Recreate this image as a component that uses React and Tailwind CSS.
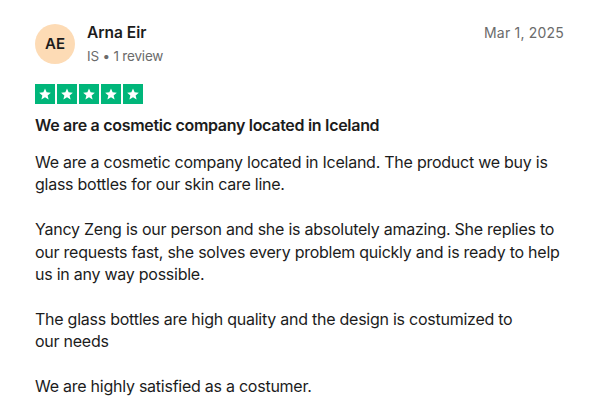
import React from "react";

const paragraphs = [
  "We are a cosmetic company located in Iceland. The product we buy is glass bottles for our skin care line.",
  "Yancy Zeng is our person and she is absolutely amazing. She replies to our requests fast, she solves every problem quickly and is ready to help us in any way possible.",
  "The glass bottles are high quality and the design is costumized to\nour needs",
  "We are highly satisfied as a costumer.",
];

function Star() {
  return (
    <div className="w-5 h-5 bg-[#00b67a] flex items-center justify-center">
      <svg viewBox="0 0 24 24" className="w-[14px] h-[14px]" fill="white">
        <path d="M12 2.5l2.8 6.6 7.2.6-5.5 4.7 1.7 7-6.2-3.8-6.2 3.8 1.7-7L2 9.7l7.2-.6z" />
      </svg>
    </div>
  );
}

export default function App() {
  return (
    <div
      className="w-[595px] h-[406px] bg-white pl-[35px] pr-[31px] pt-6 text-[#1c1c1c] overflow-hidden"
      style={{ fontFamily: "Inter, 'Liberation Sans', sans-serif" }}
    >
      <div className="flex items-start justify-between h-10">
        <div className="flex items-start gap-3">
          <div className="w-10 h-10 shrink-0 rounded-full bg-[#fddbb5] flex items-center justify-center text-[15px] font-semibold">
            AE
          </div>
          <div className="flex flex-col -mt-[1px]">
            <span className="text-[15.5px] font-semibold leading-5">Arna Eir</span>
            <span className="text-[13.5px] tracking-[-0.2px] text-[#6b6b6b] leading-5 mt-[3px]">IS • 1 review</span>
          </div>
        </div>
        <span className="text-[14px] tracking-[0.2px] text-[#6b6b6b] leading-5 -mt-[1px]">Mar 1, 2025</span>
      </div>

      <div className="flex gap-[2px] mt-5">
        <Star />
        <Star />
        <Star />
        <Star />
        <Star />
      </div>

      <h2 className="text-[16px] tracking-[-0.3px] font-semibold leading-[22px] mt-[10px]">
        We are a cosmetic company located in Iceland
      </h2>

      <div className="mt-[15px] text-[16px] tracking-[-0.25px] leading-[22.4px] whitespace-pre-line">
        {paragraphs.map((p, i) => (
          <p key={i} className={i > 0 ? "mt-[22.4px]" : ""}>
            {p}
          </p>
        ))}
      </div>
    </div>
  );
}
